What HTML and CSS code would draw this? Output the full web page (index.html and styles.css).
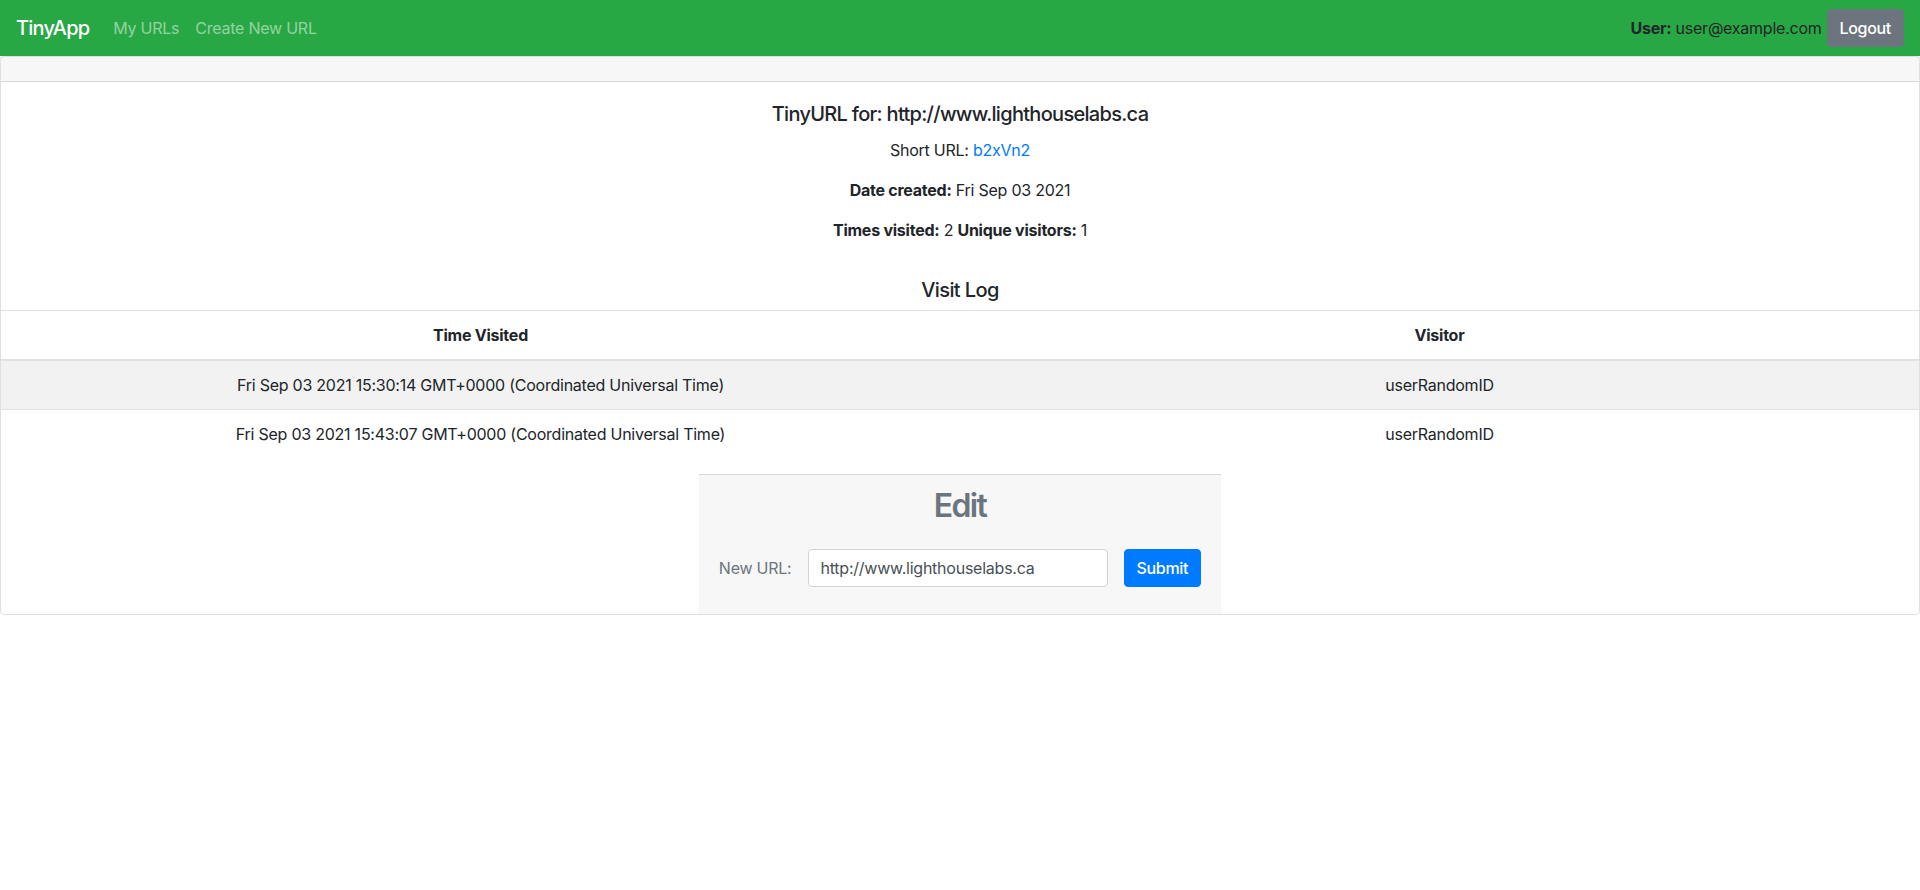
FILE: index.html
```html
<!DOCTYPE html>
<html>
<head>
<meta charset="utf-8">
<title>TinyApp</title>
<link rel="stylesheet" href="styles.css">
</head>
<body>
<nav class="navbar">
  <div class="nav-left">
    <a class="brand" href="#">TinyApp</a>
    <a class="nav-link" href="#">My URLs</a>
    <a class="nav-link" href="#">Create New URL</a>
  </div>
  <div class="nav-right">
    <span class="user"><b>User:</b> user@example.com</span>
    <button class="btn btn-secondary">Logout</button>
  </div>
</nav>
<main class="card">
  <div class="card-header"></div>
  <div class="card-body">
    <h5 class="card-title">TinyURL for: http://www.lighthouselabs.ca</h5>
    <p class="card-text">Short URL: <a class="link" href="#">b2xVn2</a></p>
    <p class="card-text"><b>Date created:</b> Fri Sep 03 2021</p>
    <p class="card-text"><b>Times visited:</b> 2 <b>Unique visitors:</b> 1</p>
  </div>
  <h5 class="log-title">Visit Log</h5>
  <table class="table">
    <thead>
      <tr><th>Time Visited</th><th>Visitor</th></tr>
    </thead>
    <tbody>
      <tr class="striped"><td>Fri Sep 03 2021 15:30:14 GMT+0000 (Coordinated Universal Time)</td><td>userRandomID</td></tr>
      <tr><td>Fri Sep 03 2021 15:43:07 GMT+0000 (Coordinated Universal Time)</td><td>userRandomID</td></tr>
    </tbody>
  </table>
  <div class="edit-box">
    <h2 class="edit-title">Edit</h2>
    <form class="edit-form">
      <label class="edit-label" for="newurl">New URL:</label>
      <input class="input" id="newurl" type="text" value="http://www.lighthouselabs.ca">
      <button class="btn btn-primary" type="button">Submit</button>
    </form>
  </div>
</main>
</body>
</html>
```
FILE: styles.css
```css
* { box-sizing: border-box; }
html, body { margin: 0; padding: 0; }
body {
  font-family: Inter, "Liberation Sans", sans-serif;
  font-size: 16px;
  line-height: 1.5;
  letter-spacing: -0.015em;
  color: #212529;
  background: #fff;
}
a { text-decoration: none; }
b { font-weight: 700; }

.navbar {
  height: 56px;
  background: #28a745;
  padding: 8px 16px;
  display: flex;
  align-items: center;
  justify-content: space-between;
}
.nav-left { display: flex; align-items: center; }
.brand {
  color: #fff;
  font-size: 20px;
  font-weight: 500;
  line-height: 30px;
  letter-spacing: -0.04em;
  margin-right: 16px;
}
.nav-link {
  color: rgba(255,255,255,.5);
  padding: 8px 8px;
}
.nav-right { display: flex; align-items: center; gap: 5px; }
.user { color: #212529; }

.btn {
  font-family: inherit;
  font-size: 16px;
  font-weight: 500;
  line-height: 24px;
  letter-spacing: -0.02em;
  padding: 6px 12px;
  border: 1px solid transparent;
  border-radius: 4px;
  height: 38px;
  color: #fff;
  cursor: pointer;
}
.btn-secondary { background: #6c757d; border-color: #6c757d; }
.btn-primary { background: #007bff; border-color: #007bff; }

.card {
  border: 1px solid rgba(0,0,0,.125);
  border-radius: 4px;
  display: flex;
  flex-direction: column;
}
.card-header {
  height: 25px;
  background: rgba(0,0,0,.03);
  border-bottom: 1px solid rgba(0,0,0,.125);
}
.card-body {
  padding: 20px;
  text-align: center;
}
.card-title {
  font-size: 20px;
  font-weight: 500;
  line-height: 1.2;
  letter-spacing: -0.035em;
  margin: 0 0 12px;
}
.card-text { margin: 0 0 16px; }
.link { color: #007bff; }

.log-title {
  font-size: 20px;
  font-weight: 500;
  line-height: 1.2;
  letter-spacing: -0.03em;
  margin: 0 0 8px;
  text-align: center;
}
.table {
  width: 100%;
  border-collapse: collapse;
  table-layout: fixed;
  margin-bottom: 16px;
}
.table th, .table td {
  padding: 12px;
  text-align: center;
  border-top: 1px solid #dee2e6;
  vertical-align: top;
}
.table th { font-weight: 700; }
.table thead th { border-bottom: 2px solid #dee2e6; }
.striped { background: rgba(0,0,0,.05); }

.edit-box {
  align-self: center;
  background: rgba(0,0,0,.03);
  border-top: 1px solid rgba(0,0,0,.125);
  padding: 12px 20px;
  text-align: center;
}
.edit-title {
  font-size: 32px;
  font-weight: 600;
  line-height: 1.2;
  letter-spacing: -0.05em;
  color: #6c757d;
  margin: 0;
}
.edit-form {
  display: flex;
  align-items: center;
  gap: 16px;
  margin: 24px 0 15px;
}
.edit-label { color: #6c757d; }
.input {
  width: 300px;
  height: 38px;
  padding: 6px 12px;
  font-family: inherit;
  font-size: 16px;
  letter-spacing: -0.015em;
  color: #495057;
  border: 1px solid #ced4da;
  border-radius: 4px;
  background: #fff;
}
```
